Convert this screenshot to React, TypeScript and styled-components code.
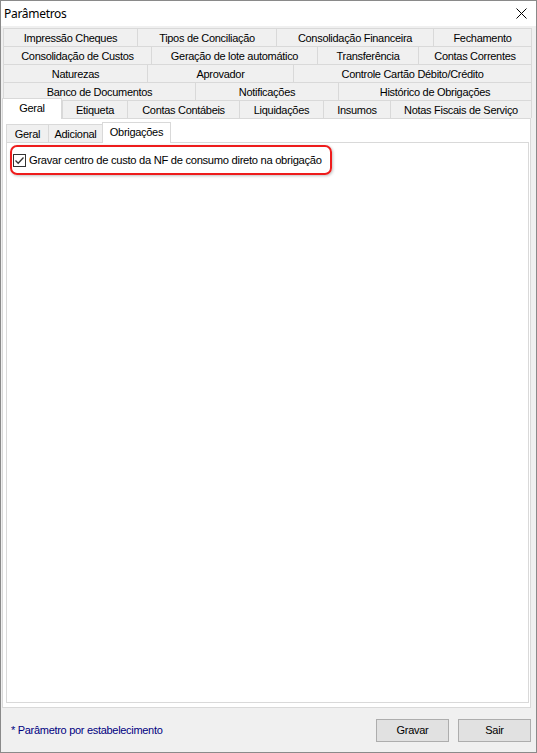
import React from "react";
import styled, { createGlobalStyle } from "styled-components";

const GlobalStyle = createGlobalStyle`
  html, body { margin: 0; padding: 0; background: #ffffff; }
  * { box-sizing: border-box; }
`;

const FONT = `"Liberation Sans", Arial, sans-serif`;

const Window = styled.div`
  width: 537px;
  height: 753px;
  border: 1px solid #8a8a8a;
  display: flex;
  flex-direction: column;
  background: #f0f0f0;
  font-family: ${FONT};
  font-size: 11px;
  letter-spacing: -0.3px;
  color: #000;
  overflow: hidden;
`;

const TitleBar = styled.div`
  height: 25px;
  background: #ffffff;
  display: flex;
  align-items: center;
  justify-content: space-between;
  padding: 0 9px 0 3px;
  flex-shrink: 0;
`;

const Title = styled.span`
  font-family: "Noto Sans", "Open Sans", sans-serif;
  font-size: 12px;
  letter-spacing: -0.3px;
  color: #000;
`;

const CloseBtn = styled.span`
  display: flex;
  width: 11px;
  height: 11px;
`;

const Client = styled.div`
  flex: 1;
  display: flex;
  flex-direction: column;
  padding: 2px 4px 0 1px;
`;

const TabControl = styled.div`
  width: 530px;
  display: flex;
  flex-direction: column;
`;

const TabRow = styled.div<{ $front?: boolean }>`
  display: flex;
  align-items: flex-end;
  margin-left: ${(p) => (p.$front ? "0" : "1px")};
  margin-top: ${(p) => (p.$front ? "-2px" : "0")};
  width: ${(p) => (p.$front ? "530px" : "529px")};
  height: ${(p) => (p.$front ? "20px" : "18px")};
  position: relative;
  z-index: ${(p) => (p.$front ? 2 : 1)};
`;

const Tab = styled.div<{ $w: number; $active?: boolean; $last?: boolean }>`
  width: ${(p) => p.$w}px;
  height: ${(p) => (p.$active ? "21px" : "18px")};
  margin-bottom: ${(p) => (p.$active ? "-1px" : "0")};
  background: ${(p) => (p.$active ? "#ffffff" : "#f0f0f0")};
  border-top: 1px solid #d9d9d9;
  border-left: 1px solid #d9d9d9;
  border-right: ${(p) => (p.$last || p.$active ? "1px solid #d9d9d9" : "none")};
  display: flex;
  align-items: center;
  justify-content: center;
  padding-bottom: ${(p) => (p.$active ? "2px" : "0")};
  white-space: nowrap;
  flex-shrink: 0;
`;

const OuterPage = styled.div`
  width: 529px;
  height: 590px;
  background: #ffffff;
  border: 1px solid #d9d9d9;
  padding: 3px 1px 4px 3px;
  display: flex;
  flex-direction: column;
`;

const InnerRow = styled.div`
  display: flex;
  align-items: flex-end;
  height: 20px;
  position: relative;
  z-index: 1;
`;

const InnerPanel = styled.div`
  flex: 1;
  width: 523px;
  background: #ffffff;
  border: 1px solid #d9d9d9;
  padding: 2px 3px;
`;

const Highlight = styled.div`
  width: 322px;
  height: 30px;
  border: 2px solid #ee1c1c;
  border-radius: 7px;
  box-shadow: 1px 1px 3px rgba(0, 0, 0, 0.25);
  display: flex;
  align-items: center;
  padding-left: 1px;
  gap: 3px;
`;

const Check = styled.span`
  width: 13px;
  height: 13px;
  border: 1px solid #333333;
  background: #ffffff;
  display: flex;
  align-items: center;
  justify-content: center;
`;

const Label = styled.span`
  font-size: 11.2px;
  color: #000;
  white-space: nowrap;
`;

const Footer = styled.div`
  flex: 1;
  display: flex;
  align-items: center;
  padding: 0 1px 0 9px;
`;

const Note = styled.span`
  color: #000080;
  flex: 1;
`;

const Buttons = styled.div`
  display: flex;
  gap: 9px;
`;

const Button = styled.button`
  width: 73px;
  height: 23px;
  background: #e1e1e1;
  border: 1px solid #adadad;
  font-family: ${FONT};
  font-size: 11px;
  letter-spacing: -0.3px;
  color: #000;
  padding: 0;
`;

type TabDef = [string, number];

const rows: TabDef[][] = [
  [
    ["Impressão Cheques", 134],
    ["Tipos de Conciliação", 139],
    ["Consolidação Financeira", 157],
    ["Fechamento", 99],
  ],
  [
    ["Consolidação de Custos", 148],
    ["Geração de lote automático", 166],
    ["Transferência", 101],
    ["Contas Correntes", 114],
  ],
  [
    ["Naturezas", 144],
    ["Aprovador", 146],
    ["Controle Cartão Débito/Crédito", 239],
  ],
  [
    ["Banco de Documentos", 192],
    ["Notificações", 143],
    ["Histórico de Obrigações", 194],
  ],
];

const frontRow: TabDef[] = [
  ["Geral", 60],
  ["Etiqueta", 65],
  ["Contas Contábeis", 112],
  ["Liquidações", 84],
  ["Insumos", 67],
  ["Notas Fiscais de Serviço", 142],
];

const innerTabs: TabDef[] = [
  ["Geral", 42],
  ["Adicional", 54],
  ["Obrigações", 69],
];

export default function App() {
  return (
    <>
      <GlobalStyle />
      <Window>
        <TitleBar>
          <Title>Parâmetros</Title>
          <CloseBtn>
            <svg width="11" height="11" viewBox="0 0 11 11">
              <path d="M0.5 0.5 L10.5 10.5 M10.5 0.5 L0.5 10.5" stroke="#000" strokeWidth="1" fill="none" />
            </svg>
          </CloseBtn>
        </TitleBar>
        <Client>
          <TabControl>
            {rows.map((row, i) => (
              <TabRow key={i}>
                {row.map(([t, w], j) => (
                  <Tab key={t} $w={w} $last={j === row.length - 1}>
                    {t}
                  </Tab>
                ))}
              </TabRow>
            ))}
            <TabRow $front>
              {frontRow.map(([t, w], j) => (
                <Tab key={t} $w={w} $active={j === 0} $last={j === frontRow.length - 1}>
                  {t}
                </Tab>
              ))}
            </TabRow>
            <OuterPage>
              <InnerRow>
                {innerTabs.map(([t, w], j) => (
                  <Tab key={t} $w={w} $active={j === 2}>
                    {t}
                  </Tab>
                ))}
              </InnerRow>
              <InnerPanel>
                <Highlight>
                  <Check>
                    <svg width="11" height="11" viewBox="0 0 11 11">
                      <path d="M1.5 5.5 L4.2 8.2 L9.5 2.5" stroke="#333" strokeWidth="1.3" fill="none" />
                    </svg>
                  </Check>
                  <Label>Gravar centro de custo da NF de consumo direto na obrigação</Label>
                </Highlight>
              </InnerPanel>
            </OuterPage>
          </TabControl>
          <Footer>
            <Note>* Parâmetro por estabelecimento</Note>
            <Buttons>
              <Button>Gravar</Button>
              <Button>Sair</Button>
            </Buttons>
          </Footer>
        </Client>
      </Window>
    </>
  );
}
